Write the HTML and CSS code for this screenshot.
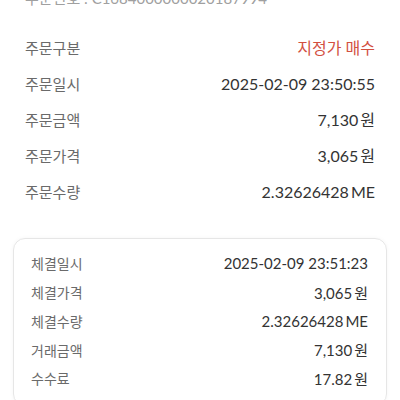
FILE: index.html
```html
<!DOCTYPE html>
<html lang="ko">
  <head>
    <meta charset="UTF-8" />
    <meta name="viewport" content="width=device-width, initial-scale=1.0" />
    <title>주문 상세</title>
    <link rel="stylesheet" href="styles.css">
  </head>
  <body>
    <div class="order-no">주문번호 : C1684000000020187994</div>

    <div class="order-info">
      <div class="row">
        <span class="label">주문구분</span>
        <span class="value buy">지정가 매수</span>
      </div>
      <div class="row">
        <span class="label">주문일시</span>
        <span class="value">2025-02-09 23:50:55</span>
      </div>
      <div class="row">
        <span class="label">주문금액</span>
        <span class="value">7,130<span class="unit">원</span></span>
      </div>
      <div class="row">
        <span class="label">주문가격</span>
        <span class="value">3,065<span class="unit">원</span></span>
      </div>
      <div class="row">
        <span class="label">주문수량</span>
        <span class="value">2.32626428<span class="unit">ME</span></span>
      </div>
    </div>

    <div class="trade-card">
      <div class="row">
        <span class="label">체결일시</span>
        <span class="value">2025-02-09 23:51:23</span>
      </div>
      <div class="row">
        <span class="label">체결가격</span>
        <span class="value">3,065<span class="unit">원</span></span>
      </div>
      <div class="row">
        <span class="label">체결수량</span>
        <span class="value">2.32626428<span class="unit">ME</span></span>
      </div>
      <div class="row">
        <span class="label">거래금액</span>
        <span class="value">7,130<span class="unit">원</span></span>
      </div>
      <div class="row">
        <span class="label">수수료</span>
        <span class="value">17.82<span class="unit">원</span></span>
      </div>
    </div>
  </body>
</html>
```

FILE: styles.css
```css
body {
  font-family: Lato, "Noto Sans CJK KR", sans-serif;
  background-color: #ffffff;
  color: #333333;
  margin: 0;
  overflow: hidden;
}
.order-no {
  margin-top: -12px;
  padding: 0 25px;
  font-size: 15px;
  line-height: 20px;
  color: #a0a0a0;
}
.row {
  display: flex;
  justify-content: space-between;
  align-items: center;
}
.label {
  color: #6a6a6a;
}
.unit {
  margin-left: 2px;
}
.order-info {
  padding: 21px 25px 0;
}
.order-info .row {
  height: 36px;
}
.order-info .label {
  font-size: 15px;
}
.order-info .value {
  font-size: 16px;
}
.buy {
  color: #d2503f;
}
.trade-card {
  margin: 29px 13px 0;
  padding: 10px 18px 12px 17px;
  border: 1px solid #e6e6e6;
  border-radius: 12px;
  box-shadow: 0 0 4px rgba(0, 0, 0, 0.04);
}
.trade-card .row {
  height: 28.75px;
}
.trade-card .label {
  font-size: 14px;
}
.trade-card .value {
  font-size: 15px;
}
```
